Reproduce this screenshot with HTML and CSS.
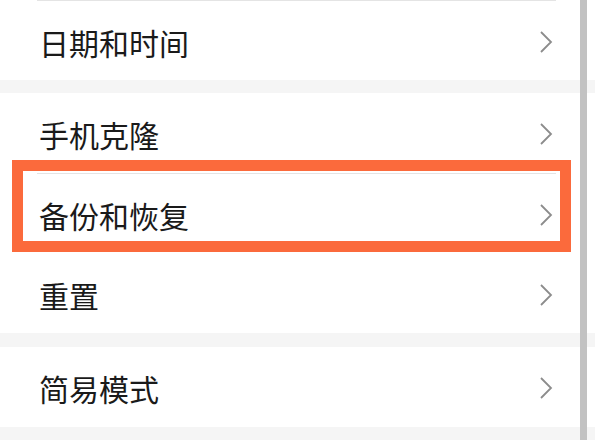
FILE: index.html
```html
<!DOCTYPE html>
<html lang="zh-CN">
<head>
  <meta charset="UTF-8">
  <title>系统设置</title>
  <link rel="stylesheet" href="styles.css">
</head>
<body>
  <div class="list">
    <div class="group">
      <div class="row line-top">
        <span class="label">日期和时间</span>
        <svg class="arrow" viewBox="0 0 14 24"><polyline points="2,2 12,12 2,22"/></svg>
      </div>
    </div>
    <div class="gap"></div>

    <div class="group">
      <div class="row">
        <span class="label">手机克隆</span>
        <svg class="arrow" viewBox="0 0 14 24"><polyline points="2,2 12,12 2,22"/></svg>
      </div>
      <div class="row">
        <span class="label">备份和恢复</span>
        <svg class="arrow" viewBox="0 0 14 24"><polyline points="2,2 12,12 2,22"/></svg>
      </div>
      <div class="row no-line">
        <span class="label">重置</span>
        <svg class="arrow" viewBox="0 0 14 24"><polyline points="2,2 12,12 2,22"/></svg>
      </div>
    </div>
    <div class="gap wide"></div>

    <div class="group">
      <div class="row">
        <span class="label">简易模式</span>
        <svg class="arrow" viewBox="0 0 14 24"><polyline points="2,2 12,12 2,22"/></svg>
      </div>
    </div>
    <div class="gap"></div>
  </div>

  <!-- annotation box around 备份和恢复 -->
  <div class="highlight"></div>
  <div class="scrollbar"></div>
</body>
</html>
```

FILE: styles.css
```css
body {
  margin: 0;
  background: #fff;
  font-family: "Noto Sans CJK SC", "Noto Sans", sans-serif;
  color: #1a1a1a;
  height: 440px;
  overflow: hidden;
}

.list {
  display: flex;
  flex-direction: column;
}

.group {
  background: #fff;
}

.gap {
  height: 13px;
  background: #f5f5f5;
}

.gap.wide {
  height: 14px;
}

.row {
  box-sizing: border-box;
  height: 80px;
  margin: 0 39px 0 37px;
  padding: 2px 3px 0 2px;
  display: flex;
  align-items: center;
  justify-content: space-between;
}

.row + .row,
.row.line-top {
  border-top: 1px solid #e4e4e4;
}

.row.no-line {
  border-top-color: transparent;
}

.label {
  font-size: 30px;
  line-height: 40px;
}

.arrow {
  width: 14px;
  height: 24px;
  fill: none;
  stroke: #8c8c8c;
  stroke-width: 1.8;
}

.highlight {
  position: absolute;
  left: 12px;
  top: 160px;
  width: 537px;
  height: 70px;
  border: 11px solid #fb6a3c;
}

.scrollbar {
  position: absolute;
  left: 580px;
  top: 0;
  width: 7px;
  height: 440px;
  background: #c2c2c2;
}
```
